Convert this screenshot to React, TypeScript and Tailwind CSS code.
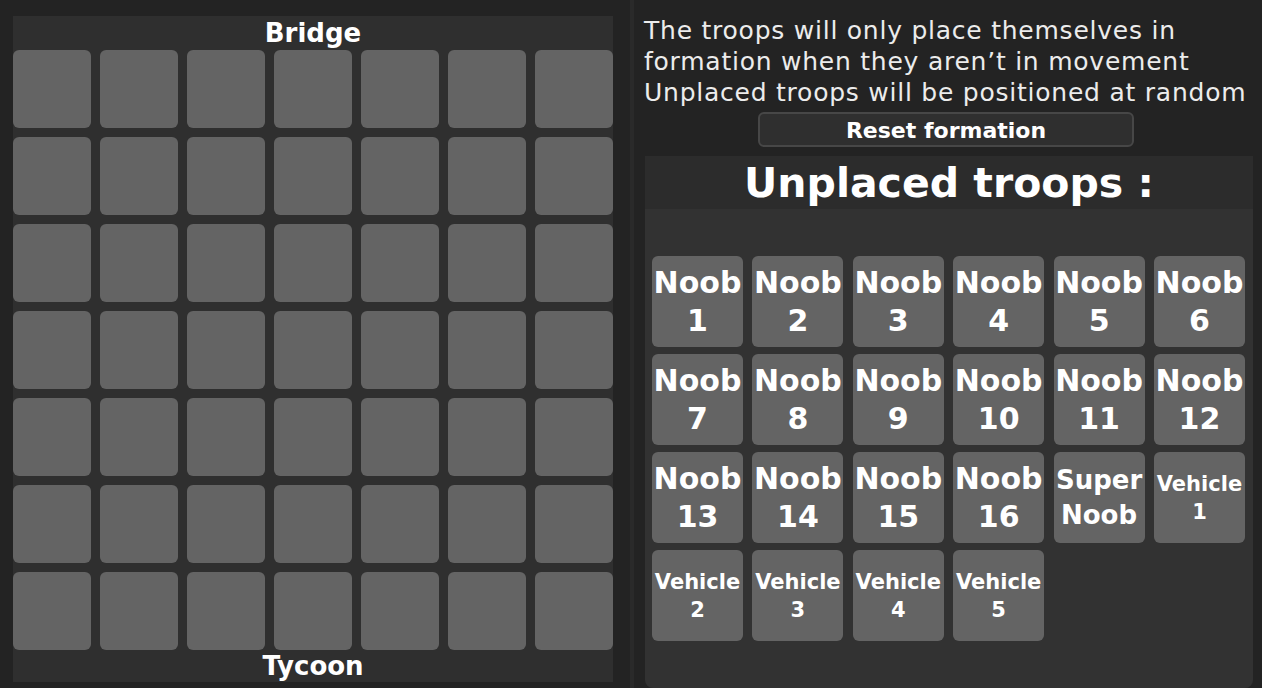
import React from "react"

const font = { fontFamily: '"DejaVu Sans", Verdana, sans-serif' }

const troops: { top: string; bottom: string; kind: "noob" | "super" | "vehicle" }[] = [
  ...Array.from({ length: 16 }, (_, i) => ({ top: "Noob", bottom: String(i + 1), kind: "noob" as const })),
  { top: "Super", bottom: "Noob", kind: "super" },
  ...Array.from({ length: 5 }, (_, i) => ({ top: "Vehicle", bottom: String(i + 1), kind: "vehicle" as const })),
]

function FormationGrid() {
  return (
    <div className="mt-[16px] ml-[13px] flex h-[666px] w-[600px] flex-col bg-[#2f2f2f]">
      <div className="flex h-[34px] items-center justify-center pt-[1px] text-[26px] font-bold text-white">
        Bridge
      </div>
      <div className="grid grid-cols-7 gap-[9px]">
        {Array.from({ length: 49 }).map((_, i) => (
          <div key={i} className="h-[78px] rounded-[6px] bg-[#646464]" />
        ))}
      </div>
      <div className="flex h-[32px] items-center justify-center pt-[1px] text-[26px] font-bold text-white">
        Tycoon
      </div>
    </div>
  )
}

function TroopCard({ top, bottom, kind }: (typeof troops)[number]) {
  const size =
    kind === "noob"
      ? "text-[30px] leading-[38px]"
      : kind === "super"
        ? "text-[26px] leading-[35px]"
        : "text-[21px] leading-[28px]"
  return (
    <div className="flex h-[91px] w-[91px] flex-col items-center justify-center rounded-[6px] bg-[#646464] pt-[1px] text-center font-bold text-white">
      <span className={size + " whitespace-nowrap"}>{top}</span>
      <span className={size}>{bottom}</span>
    </div>
  )
}

export default function App() {
  return (
    <div style={font} className="flex h-[688px] w-[1262px] overflow-hidden bg-[#232323]">
      <FormationGrid />

      <div className="ml-[17px] w-[4px] self-stretch bg-[#2a2a2a]" />

      <div className="ml-[10px] flex w-[609px] flex-col">
        <div className="pt-[15px] text-[25px] leading-[31px] tracking-[0.76px] whitespace-nowrap text-[#ececec]">
          <p>The troops will only place themselves in</p>
          <p>formation when they aren’t in movement</p>
          <p>Unplaced troops will be positioned at random</p>
        </div>

        <button className="mt-[4px] ml-[114px] flex h-[35px] w-[376px] items-center justify-center rounded-[6px] border-2 border-[#474747] bg-[#2f2f2f] pt-[1px] text-[22px] font-bold text-white">
          Reset formation
        </button>

        <div className="mt-[9px] ml-[1px] flex flex-1 flex-col rounded-b-[8px] bg-[#323232]">
          <div className="flex h-[53px] items-center justify-center bg-[#2c2c2c] pt-[2px] text-[41px] font-bold text-white">
            Unplaced troops :
          </div>
          <div className="grid grid-cols-[repeat(6,91px)] gap-x-[9.4px] gap-y-[7px] px-[7px] pt-[47px]">
            {troops.map((t) => (
              <TroopCard key={t.top + t.bottom} {...t} />
            ))}
          </div>
        </div>
      </div>
    </div>
  )
}
